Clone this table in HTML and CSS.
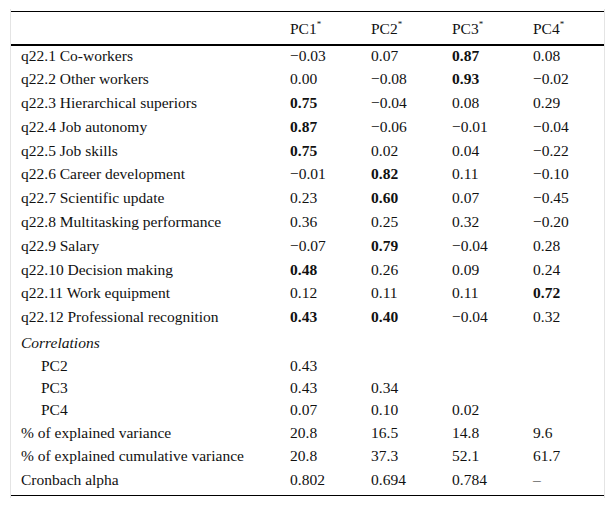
FILE: index.html
```html
<!DOCTYPE html>
<html lang="en">
<head>
<meta charset="utf-8">
<title>Principal components</title>
<link rel="stylesheet" href="styles.css">
</head>
<body>
<div class="frame">
<table class="pc-table">
<thead>
<tr><th class="label"></th><th>PC1<sup>*</sup></th><th>PC2<sup>*</sup></th><th>PC3<sup>*</sup></th><th>PC4<sup>*</sup></th></tr>
</thead>
<tbody>
<tr><td class="label">q22.1 Co-workers</td><td>−0.03</td><td>0.07</td><td><b>0.87</b></td><td>0.08</td></tr>
<tr><td class="label">q22.2 Other workers</td><td>0.00</td><td>−0.08</td><td><b>0.93</b></td><td>−0.02</td></tr>
<tr><td class="label">q22.3 Hierarchical superiors</td><td><b>0.75</b></td><td>−0.04</td><td>0.08</td><td>0.29</td></tr>
<tr><td class="label">q22.4 Job autonomy</td><td><b>0.87</b></td><td>−0.06</td><td>−0.01</td><td>−0.04</td></tr>
<tr><td class="label">q22.5 Job skills</td><td><b>0.75</b></td><td>0.02</td><td>0.04</td><td>−0.22</td></tr>
<tr><td class="label">q22.6 Career development</td><td>−0.01</td><td><b>0.82</b></td><td>0.11</td><td>−0.10</td></tr>
<tr><td class="label">q22.7 Scientific update</td><td>0.23</td><td><b>0.60</b></td><td>0.07</td><td>−0.45</td></tr>
<tr><td class="label">q22.8 Multitasking performance</td><td>0.36</td><td>0.25</td><td>0.32</td><td>−0.20</td></tr>
<tr><td class="label">q22.9 Salary</td><td>−0.07</td><td><b>0.79</b></td><td>−0.04</td><td>0.28</td></tr>
<tr><td class="label">q22.10 Decision making</td><td><b>0.48</b></td><td>0.26</td><td>0.09</td><td>0.24</td></tr>
<tr><td class="label">q22.11 Work equipment</td><td>0.12</td><td>0.11</td><td>0.11</td><td><b>0.72</b></td></tr>
<tr><td class="label">q22.12 Professional recognition</td><td><b>0.43</b></td><td><b>0.40</b></td><td>−0.04</td><td>0.32</td></tr>
<tr class="corr"><td class="label"><i>Correlations</i></td><td></td><td></td><td></td><td></td></tr>
<tr class="tight"><td class="label sub">PC2</td><td>0.43</td><td></td><td></td><td></td></tr>
<tr class="tight"><td class="label sub">PC3</td><td>0.43</td><td>0.34</td><td></td><td></td></tr>
<tr class="tight"><td class="label sub">PC4</td><td>0.07</td><td>0.10</td><td>0.02</td><td></td></tr>
<tr><td class="label">% of explained variance</td><td>20.8</td><td>16.5</td><td>14.8</td><td>9.6</td></tr>
<tr class="tight"><td class="label">% of explained cumulative variance</td><td>20.8</td><td>37.3</td><td>52.1</td><td>61.7</td></tr>
<tr class="last"><td class="label">Cronbach alpha</td><td>0.802</td><td>0.694</td><td>0.784</td><td>–</td></tr>
</tbody>
</table>
</div>
</body>
</html>
```

FILE: styles.css
```css
html, body {
  margin: 0;
  padding: 0;
  background: #ffffff;
}

body {
  font-family: "Liberation Serif", "Times New Roman", serif;
  font-size: 15.5px;
  color: #111111;
}

.frame {
  box-sizing: border-box;
  width: 595px;
  margin: 9px 0 0 10px;
  padding: 2px 0 2px 0;
  border-left: 1px solid #e4e4e4;
  border-right: 1px solid #e4e4e4;
}

.pc-table {
  width: 593px;
  border-collapse: collapse;
  table-layout: fixed;
  border-top: 1px solid #000000;
  border-bottom: 1px solid #000000;
}

.pc-table th,
.pc-table td {
  padding: 0 0 2px 10px;
  text-align: left;
  vertical-align: middle;
  white-space: nowrap;
  font-weight: normal;
  width: 81px;
  box-sizing: border-box;
  line-height: 18px;
}

.pc-table th.label,
.pc-table td.label {
  width: 269px;
}

.pc-table thead tr {
  height: 33px;
}

.pc-table thead th {
  border-bottom: 2px solid #000000;
  padding-top: 2px;
  padding-bottom: 0;
}

.pc-table tbody tr {
  height: 23.8px;
}

.pc-table tbody tr.tight {
  height: 22px;
}

.pc-table tbody tr.corr {
  height: 26px;
}

.pc-table tbody tr.corr td {
  padding-bottom: 0;
}

.pc-table tbody tr.last {
  height: 28px;
}

.pc-table tbody tr.last td {
  padding-bottom: 4px;
}

.pc-table b {
  font-weight: bold;
}

.pc-table sup {
  font-size: 9px;
  vertical-align: 7px;
  line-height: 0;
}

.pc-table td.sub {
  padding-left: 30px;
}
```
